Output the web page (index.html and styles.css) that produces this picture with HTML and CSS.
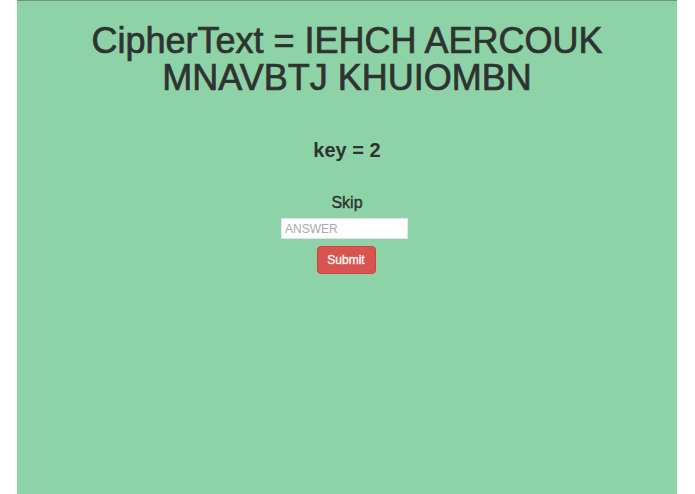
FILE: index.html
```html
<!DOCTYPE html>
<html>
<head>
<meta charset="utf-8">
<link rel="stylesheet" href="styles.css">
</head>
<body>
<div class="panel">
  <h1 class="cipher">CipherText = IEHCH AERCOUK MNAVBTJ KHUIOMBN</h1>
  <h3 class="key">key = 2</h3>
  <div class="skip">Skip</div>
  <form class="answer-form">
    <input class="answer" type="text" placeholder="ANSWER">
    <button class="submit" type="button">Submit</button>
  </form>
</div>
</body>
</html>
```
FILE: styles.css
```css
html, body {
  margin: 0;
  padding: 0;
  background: #ffffff;
  height: 100%;
}
body {
  font-family: "Liberation Sans", Arial, Helvetica, sans-serif;
  color: #333333;
}
.panel {
  margin: 0 18px 0 17px;
  min-height: 100%;
  box-sizing: border-box;
  background: #8ed3a7;
  border-top: 1px solid #6f9480;
  text-align: center;
  padding-top: 21px;
}
.cipher {
  margin: 0 auto;
  width: 560px;
  font-size: 36px;
  line-height: 37px;
  font-weight: normal;
  color: #2e3330;
  -webkit-text-stroke: 0.7px #2e3330;
}
.key {
  margin: 42px 0 0;
  font-size: 20px;
  line-height: 24px;
  font-weight: bold;
  color: #2e3330;
}
.skip {
  margin-top: 30px;
  font-size: 16px;
  line-height: 21px;
  color: #2e3330;
  -webkit-text-stroke: 0.4px #2e3330;
}
.answer-form {
  margin: 5px 0 0;
  display: flex;
  flex-direction: column;
  align-items: center;
}
.answer {
  width: 127px;
  height: 21px;
  box-sizing: border-box;
  margin: 0 5px 0 0;
  padding: 0 3px;
  border: 1px solid #e4e4e4;
  background: #ffffff;
  font-family: "Liberation Sans", Arial, sans-serif;
  font-size: 12px;
  outline: none;
}
.answer::placeholder {
  color: #a9a9a9;
}
.submit {
  margin: 7px 2px 0 0;
  width: 59px;
  height: 28px;
  box-sizing: border-box;
  padding: 0;
  border: 1px solid #d43f3a;
  border-radius: 4px;
  background: #d9534f;
  color: #ffffff;
  font-family: "Liberation Sans", Arial, sans-serif;
  font-size: 12px;
  -webkit-text-stroke: 0.3px #ffffff;
}
```
